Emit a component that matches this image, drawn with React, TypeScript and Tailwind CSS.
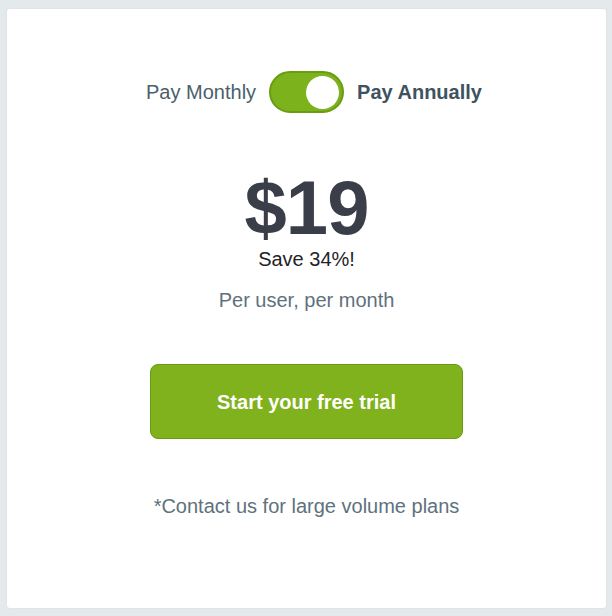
export default function App() {
  return (
    <div className="w-[612px] h-[616px] bg-[#e4eaec] pt-[9px] pl-[7px] font-['Liberation_Sans',Arial,sans-serif]">
      <div className="w-[599px] h-[599px] bg-white rounded-[3px] shadow-[0_0_2px_rgba(0,0,0,0.08)] flex flex-col items-center">
        {/* Billing toggle */}
        <div className="mt-[62px] ml-[15px] flex items-center gap-[13px] text-[20px] text-[#4b5f6c]">
          <span>Pay Monthly</span>
          <div className="w-[75px] h-[42px] rounded-full bg-[#7cb21b] border-2 border-[#6a9c12] flex items-center justify-end pr-[3px]">
            <div className="w-[33px] h-[33px] rounded-full bg-white" />
          </div>
          <span className="font-bold text-[#3e5260]">Pay Annually</span>
        </div>

        {/* Price */}
        <div className="mt-[57px] text-[76px] leading-[76px] font-bold text-[#3a3e49] tracking-[-1px]">$19</div>
        <div className="mt-[1px] text-[20px] leading-[24px] text-[#1f2328]">Save 34%!</div>
        <div className="mt-[17px] text-[20px] leading-[24px] text-[#5e717d]">Per user, per month</div>

        <button className="mt-[52px] w-[313px] h-[75px] rounded-[8px] bg-[#7fb21c] border border-[#6b9a12] text-white text-[20px] font-bold">
          Start your free trial
        </button>

        <div className="mt-[55px] text-[20px] leading-[24px] text-[#5e717d]">*Contact us for large volume plans</div>
      </div>
    </div>
  )
}
